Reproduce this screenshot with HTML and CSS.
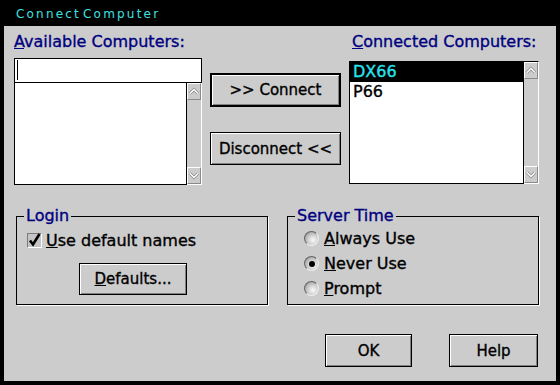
FILE: index.html
```html
<!DOCTYPE html>
<html lang="en">

<head>
    <meta charset="UTF-8">
    <meta name="viewport" content="width=device-width, initial-scale=1.0">
    <title>Connect Computer</title>
    <link rel="stylesheet" href="styles.css">
</head>

<body>

    <div class="window">
        <div class="titlebar">Connect Computer</div>

        <div class="dialog">
            <div class="top">
                <div class="col-left">
                    <div class="label"><u>A</u>vailable Computers:</div>
                    <div class="entry"><span class="caret"></span></div>
                    <div class="listbox listbox-short">
                        <div class="list-items"></div>
                        <div class="scrollbar">
                            <div class="scroll-btn">
                                <svg width="12" height="15" viewBox="0 0 12 15">
                                    <polyline points="2,9.5 6,5.5 10,9.5" fill="none" stroke="#8a8a8a" stroke-width="3" />
                                    <polyline points="2,9.5 6,5.5 10,9.5" fill="none" stroke="#fff" stroke-width="1.4" />
                                </svg>
                            </div>
                            <div class="scroll-track"></div>
                            <div class="scroll-btn">
                                <svg width="12" height="15" viewBox="0 0 12 15">
                                    <polyline points="2,5.5 6,9.5 10,5.5" fill="none" stroke="#8a8a8a" stroke-width="3" />
                                    <polyline points="2,5.5 6,9.5 10,5.5" fill="none" stroke="#fff" stroke-width="1.4" />
                                </svg>
                            </div>
                        </div>
                    </div>
                </div>

                <div class="col-mid">
                    <button class="btn btn-default btn-connect">&gt;&gt; Connect</button>
                    <button class="btn btn-disconnect">Disconnect &lt;&lt;</button>
                </div>

                <div class="col-right">
                    <div class="label label-right"><u>C</u>onnected Computers:</div>
                    <div class="listbox listbox-tall">
                        <div class="list-items">
                            <div class="item selected">DX66</div>
                            <div class="item">P66</div>
                        </div>
                        <div class="scrollbar">
                            <div class="scroll-btn">
                                <svg width="12" height="15" viewBox="0 0 12 15">
                                    <polyline points="2,9.5 6,5.5 10,9.5" fill="none" stroke="#8a8a8a" stroke-width="3" />
                                    <polyline points="2,9.5 6,5.5 10,9.5" fill="none" stroke="#fff" stroke-width="1.4" />
                                </svg>
                            </div>
                            <div class="scroll-track"></div>
                            <div class="scroll-btn">
                                <svg width="12" height="15" viewBox="0 0 12 15">
                                    <polyline points="2,5.5 6,9.5 10,5.5" fill="none" stroke="#8a8a8a" stroke-width="3" />
                                    <polyline points="2,5.5 6,9.5 10,5.5" fill="none" stroke="#fff" stroke-width="1.4" />
                                </svg>
                            </div>
                        </div>
                    </div>
                </div>
            </div>

            <div class="groups">
                <fieldset class="group group-login">
                    <legend>Login</legend>
                    <div class="check-row">
                        <span class="checkbox">
                            <svg width="15" height="15" viewBox="0 0 15 15">
                                <path d="M3 7.5 L6 11.5 L12.5 1" fill="none" stroke="#000" stroke-width="2.6" />
                            </svg>
                        </span>
                        <span><u>U</u>se default names</span>
                    </div>
                    <button class="btn btn-defaults"><u>D</u>efaults...</button>
                </fieldset>

                <fieldset class="group group-time">
                    <legend>Server Time</legend>
                    <div class="radio-row"><span class="radio"></span><span><u>A</u>lways Use</span></div>
                    <div class="radio-row"><span class="radio checked"></span><span><u>N</u>ever Use</span></div>
                    <div class="radio-row"><span class="radio"></span><span><u>P</u>rompt</span></div>
                </fieldset>
            </div>

            <div class="actions">
                <button class="btn btn-ok">OK</button>
                <button class="btn btn-help">Help</button>
            </div>
        </div>
    </div>

</body>

</html>
```

FILE: styles.css
```css
* {
    padding: 0;
    margin: 0;
    box-sizing: border-box;
}

body {
    background-color: #000;
    font-family: 'DejaVu Sans', sans-serif;
    font-size: 16px;
    color: #000;
}

.window {
    width: 560px;
    height: 385px;
    background-color: #000;
    padding: 0 4px 4px 4px;
}

.titlebar {
    height: 26px;
    padding: 3px 0 0 12px;
    line-height: 23px;
    font-size: 12px;
    letter-spacing: 2.2px;
    word-spacing: -4px;
    color: #3ee0e0;
}

.dialog {
    height: 355px;
    background-color: #cccccc;
    padding: 6px 17px 0 10px;
    -webkit-text-stroke: 0.35px currentColor;
}

/* ---------- top part: two lists and the buttons between them ---------- */

.top {
    display: flex;
    align-items: flex-start;
}

.col-left {
    width: 188px;
}

.col-mid {
    width: 131px;
    margin-left: 8px;
    display: flex;
    flex-direction: column;
}

.col-right {
    width: 190px;
    margin-left: 8px;
}

.label {
    line-height: 20px;
    color: #000080;
    margin-bottom: 6px;
    white-space: nowrap;
}

.label-right {
    padding-left: 3px;
    margin-bottom: 9px;
}

.entry {
    height: 25px;
    border: 1px solid #000;
    background-color: #fff;
}

.caret {
    display: block;
    width: 1px;
    height: 20px;
    margin: 1px 0 0 2px;
    background-color: #000;
}

.listbox {
    display: flex;
    border-left: 1px solid #000;
    border-right: 1px solid #fff;
}

.listbox-short {
    height: 102px;
}

.listbox-tall {
    height: 123px;
    border-top: 1px solid #000;
}

.list-items {
    flex: 1;
    background-color: #fff;
    border-right: 1px solid #000;
    border-bottom: 1px solid #000;
}

.item {
    height: 20px;
    line-height: 20px;
    padding-left: 3px;
}

.item.selected {
    background-color: #000;
    color: #29e3ee;
}

.scrollbar {
    width: 14px;
    display: flex;
    flex-direction: column;
    border-bottom: 1px solid #fff;
    background-color: #cccccc;
}

.scroll-btn {
    height: 17px;
    border: 1px solid;
    border-color: #fff #8a8a8a #8a8a8a #fff;
    display: flex;
    align-items: center;
    justify-content: center;
}

.scroll-track {
    flex: 1;
}

/* ---------- buttons ---------- */

.btn {
    display: block;
    font-family: inherit;
    font-size: 15px;
    color: #000;
    background-color: #cccccc;
    border: 1px solid #000;
    box-shadow: inset 1px 1px 0 #fff, inset -1px -1px 0 #808080;
    -webkit-text-stroke: 0.35px #000;
    cursor: pointer;
}

.btn-default {
    border-width: 2px;
}

.btn-connect {
    height: 34px;
    margin-top: 41px;
}

.btn-disconnect {
    height: 33px;
    margin-top: 25px;
}

.btn-defaults {
    width: 108px;
    height: 32px;
    margin: 13px 0 0 62px;
}

/* ---------- group boxes ---------- */

.groups {
    display: flex;
    gap: 19px;
    margin: 23px 0 0 2px;
}

.group {
    width: 252px;
    height: 97px;
    min-width: 0;
    padding: 0;
    border: 1px solid #000;
    box-shadow: 1px 1px 0 #fff;
}

.group legend {
    margin-left: 7px;
    padding: 0 2px;
    line-height: 16px;
    color: #000080;
}

.check-row {
    display: flex;
    align-items: center;
    gap: 4px;
    height: 20px;
    margin-top: 6px;
    padding-left: 10px;
}

.checkbox {
    width: 15px;
    height: 15px;
    border: 1px solid;
    border-color: #7a7a7a #fff #fff #7a7a7a;
    background-color: #c4c4c4;
    display: flex;
    align-items: center;
    justify-content: center;
    overflow: visible;
}

.checkbox svg {
    flex: none;
}

.group-time {
    padding-top: 2px;
}

.radio-row {
    display: flex;
    align-items: center;
    gap: 5px;
    height: 25px;
    padding-left: 16px;
}

.radio {
    position: relative;
    width: 15px;
    height: 15px;
    border-radius: 50%;
    border: 1px solid;
    border-color: #666 #eee #eee #666;
    background: radial-gradient(circle at 62% 62%, #fafafa 0, #d4d4d4 40%, #9c9c9c 85%);
}

.radio.checked::after {
    content: "";
    position: absolute;
    top: 3.5px;
    left: 3.5px;
    width: 6px;
    height: 6px;
    border-radius: 50%;
    background-color: #000;
}

/* ---------- bottom buttons ---------- */

.actions {
    display: flex;
    justify-content: flex-end;
    gap: 37px;
    margin: 29px 1px 0 0;
}

.btn-ok {
    width: 87px;
    height: 33px;
}

.btn-help {
    width: 89px;
    height: 33px;
}
```
